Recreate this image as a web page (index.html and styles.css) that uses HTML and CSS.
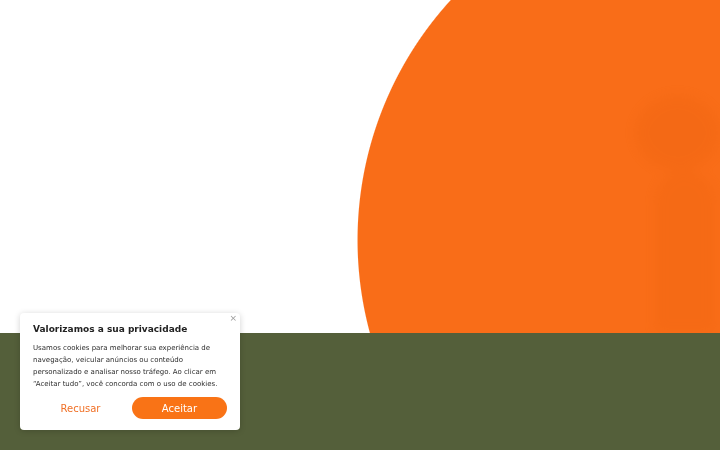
FILE: index.html
```html
<!DOCTYPE html>
<html lang="pt">
<head>
<meta charset="utf-8">
<link rel="stylesheet" href="styles.css">
</head>
<body>
<section class="hero">
  <div class="ghost">
    <span class="ghost-head"></span>
    <span class="ghost-body"></span>
  </div>
</section>
<section class="band"></section>

<div class="cookie">
  <button class="close" aria-label="Fechar">×</button>
  <h2 class="cookie-title">Valorizamos a sua privacidade</h2>
  <p class="cookie-text">Usamos cookies para melhorar sua experiência de navegação, veicular anúncios ou conteúdo personalizado e analisar nosso tráfego. Ao clicar em “Aceitar tudo”, você concorda com o uso de cookies.</p>
  <div class="cookie-actions">
    <button class="btn btn-ghost">Recusar</button>
    <button class="btn btn-primary">Aceitar</button>
  </div>
</div>
</body>
</html>
```

FILE: styles.css
```css
* { box-sizing: border-box; }
html, body { margin: 0; padding: 0; }
body {
  width: 720px;
  height: 450px;
  overflow: hidden;
  font-family: "DejaVu Sans", "Liberation Sans", sans-serif;
  background: #fff;
}
.hero {
  height: 333px;
  background: radial-gradient(circle 356px at 713px 240px, #f96d18 99.7%, rgba(249,109,24,0) 100%);
  display: flex;
  justify-content: flex-end;
  padding-top: 95px;
  overflow: hidden;
}
.ghost {
  width: 95px;
  display: flex;
  flex-direction: column;
  align-items: flex-end;
  filter: blur(6px);
  opacity: 0.12;
}
.ghost-head {
  width: 85px;
  height: 80px;
  border-radius: 50%;
  background: #d85200;
}
.ghost-body {
  width: 60px;
  height: 170px;
  margin-right: 5px;
  border-radius: 30px 30px 0 0;
  background: #dd5600;
}
.band {
  height: 117px;
  background: #545f3a;
}
.cookie {
  position: fixed;
  left: 20px;
  top: 313px;
  width: 220px;
  height: 117px;
  background: #fff;
  border-radius: 4px;
  box-shadow: 0 1px 6px rgba(0,0,0,0.18);
  padding: 10px 13px 11px 13px;
  display: flex;
  flex-direction: column;
}
.close {
  position: absolute;
  top: 1px;
  right: 3px;
  border: 0;
  background: none;
  color: #9a9a9a;
  font-size: 9px;
  padding: 0;
  font-family: "DejaVu Sans", sans-serif;
  line-height: 9px;
}
.cookie-title {
  margin: 0;
  font-size: 9px;
  font-weight: bold;
  color: #222;
  line-height: 13px;
}
.cookie-text {
  margin: 6px 0 0 0;
  width: 187px;
  font-size: 7px;
  line-height: 12px;
  color: #2e2e2e;
}
.cookie-actions {
  margin-top: auto;
  display: flex;
  gap: 4px;
}
.btn {
  flex: 1;
  height: 22px;
  border: 0;
  border-radius: 11px;
  font-family: "DejaVu Sans", sans-serif;
  font-size: 10px;
  padding: 0;
}
.btn-ghost {
  background: transparent;
  color: #f07026;
}
.btn-primary {
  background: #f97316;
  color: #fff;
}
```
